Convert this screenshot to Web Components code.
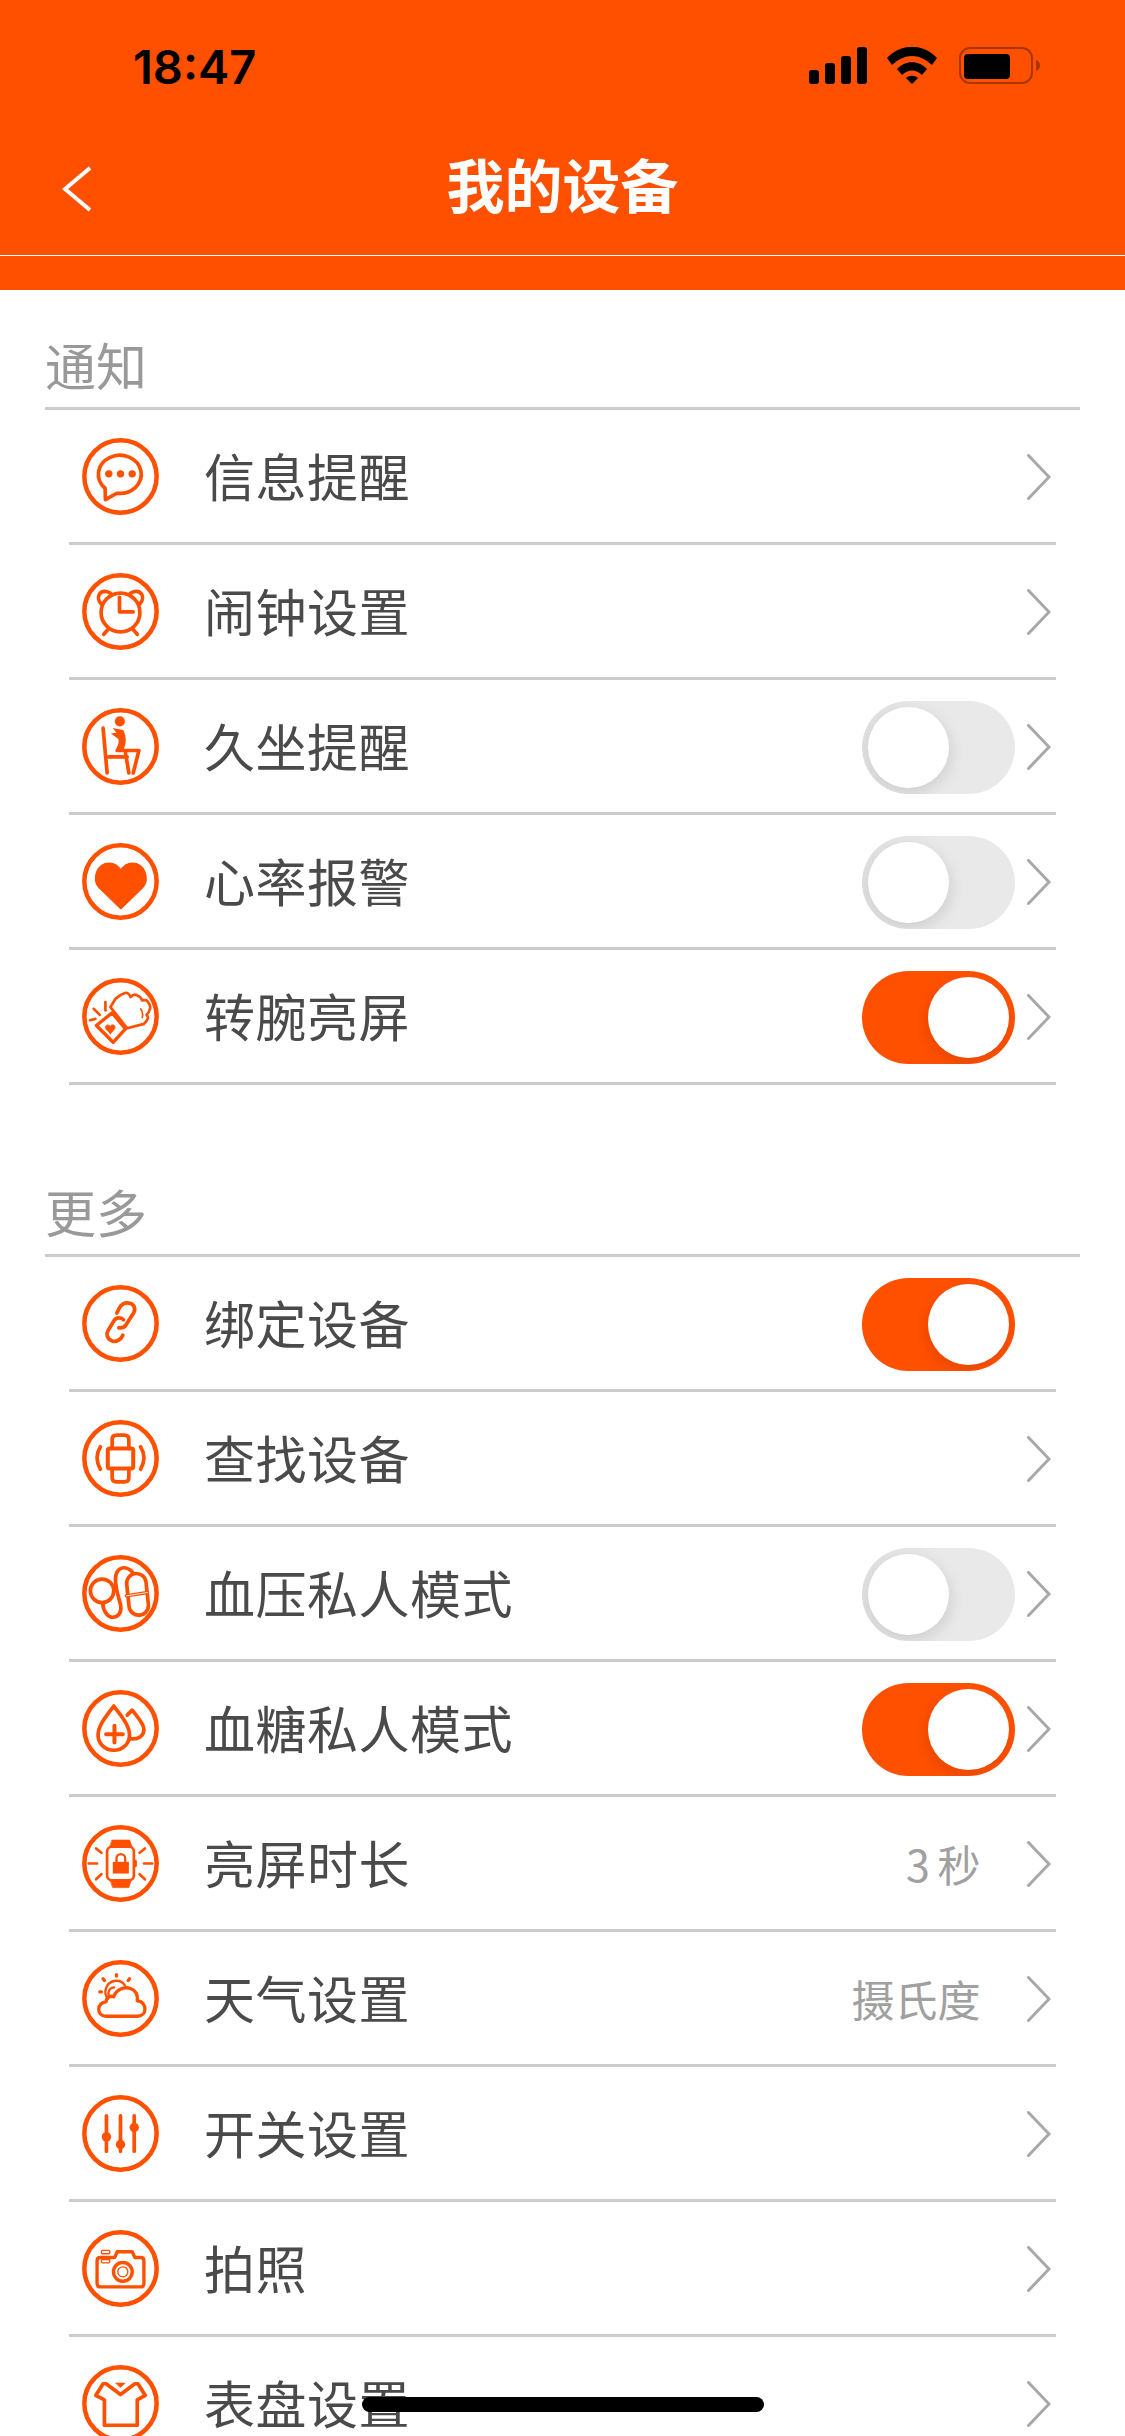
<!DOCTYPE html>
<html lang="zh">
<head>
<meta charset="utf-8">
<title>我的设备</title>
<style>
  html, body { margin: 0; height: 2436px; overflow: hidden; background: #fff; }
  body { font-family: "Noto Sans CJK SC", "Liberation Sans", sans-serif; position: relative; }
</style>
</head>
<body>
<app-header>我的设备</app-header>

<settings-section label="通知">
  <settings-row icon="chat">信息提醒</settings-row>
  <settings-row icon="clock">闹钟设置</settings-row>
  <settings-row icon="sit" toggle="off">久坐提醒</settings-row>
  <settings-row icon="heart" toggle="off">心率报警</settings-row>
  <settings-row icon="wrist" toggle="on">转腕亮屏</settings-row>
</settings-section>

<settings-section label="更多" spaced>
  <settings-row icon="link" toggle="on" no-arrow>绑定设备</settings-row>
  <settings-row icon="watch">查找设备</settings-row>
  <settings-row icon="pressure" toggle="off">血压私人模式</settings-row>
  <settings-row icon="drops" toggle="on">血糖私人模式</settings-row>
  <settings-row icon="bright" value="3 秒">亮屏时长</settings-row>
  <settings-row icon="weather" value="摄氏度">天气设置</settings-row>
  <settings-row icon="sliders">开关设置</settings-row>
  <settings-row icon="camera">拍照</settings-row>
  <settings-row icon="shirt">表盘设置</settings-row>
</settings-section>

<home-indicator></home-indicator>

<script>
// icon bodies, drawn on a 230x230 grid with the ring already in place
const ICONS = {
  chat: `<path d="M69 150L70 184 104 165A64 57 0 1 0 69 150Z"/>
    <g class="f"><circle cx="80" cy="107" r="11"/><circle cx="115" cy="107" r="11"/><circle cx="150" cy="107" r="11"/></g>`,
  clock: `<circle cx="115" cy="118" r="58"/><path d="M112 73V116H153"/>
    <path d="M57 92C38 70 55 45 85 60"/><path d="M173 92C192 70 175 45 145 60"/>
    <path d="M65 183L78 168M165 183L152 168"/>`,
  sit: `<circle class="f" cx="113" cy="40" r="15"/>
    <path d="M63 60L75 194M80 146H135M105 127H170L153 194M130 135L140 194" style="stroke-width:11"/>
    <path class="f" d="M92 60L123 66C132 84 134 105 124 124L100 125C108 113 112 100 108 92L86 76 103 74Z"/>`,
  heart: `<path class="f" style="stroke-width:6" d="M116 195L52 133C30 108 44 61 82 61 96 61 108 70 116 82 124 70 136 61 150 61 188 61 202 108 180 133Z"/>`,
  wrist: `<g style="stroke-width:8">
    <path d="M85 87L100 62Q112 50 130 44Q140 44 145 57Q155 46 165 52Q176 56 180 67Q194 64 197 72Q206 82 203 92Q200 104 193 110Q198 116 197 120Q194 130 185 137L135 150Z"/>
    <path d="M175 92Q184 104 180 118" style="stroke-width:5"/>
    <path d="M43 142L90 104 130 152 93 192Z" style="stroke-width:10"/>
    <path d="M35 92L53 110M70 72V97M24 126L40 122"/></g>
    <path class="f" style="stroke-width:2" d="M85 167L72 153C66 145 74 136 82 142 84 144 85 145 85 145 86 138 98 138 99 147 99 151 96 155 85 167Z"/>`,
  link: `<path d="M110 128Q125 130 132 118L155 82C162 68 152 54 140 54 128 52 118 58 112 68L104 84"/>
    <path d="M122 150C116 165 100 172 88 166 74 160 72 146 78 136L96 106C102 96 116 96 124 104"/>`,
  watch: `<rect x="77" y="85" width="76" height="60" rx="6" style="stroke-width:12"/>
    <path d="M90 85V58Q90 45 103 45H127Q140 45 140 58V85M90 145V172Q90 185 103 185H127Q140 185 140 172V145"/>
    <path d="M55 80Q35 113 55 147M175 80Q195 113 175 147"/>`,
  pressure: `<circle cx="60" cy="107" r="35"/>
    <path d="M62 145C64 170 78 186 92 186 108 186 118 172 116 155 114 135 100 110 100 72 100 50 112 38 125 38 136 38 144 44 150 50"/>
    <rect x="137" y="55" width="58" height="125" rx="29" transform="rotate(-6 166 118)"/>
    <path d="M132 122L196 112" style="stroke-width:10"/><path d="M132 122L196 112" style="stroke:#fff;stroke-width:2.5"/>`,
  drops: `<path d="M95 48C75 75 48 105 48 135A47 45 0 0 0 142 135C142 105 115 75 95 48Z"/>
    <path d="M97 107V157M72 132H122" style="stroke-width:12"/>
    <path d="M135 75L150 60C165 80 185 100 185 118 185 136 170 148 146 146"/>`,
  bright: `<rect x="75" y="65" width="80" height="100" rx="14" style="stroke-width:8"/>
    <path class="f" style="stroke-width:2" d="M90 45H142L150 65H83ZM85 165H147L140 187H92Z"/>
    <path class="f" style="stroke-width:0" d="M92 110H140V145H92Z"/>
    <path d="M103 110V100A13 13 0 0 1 129 100V110" style="stroke-width:7"/>
    <path d="M20 115H45M42 70L58 83M42 162L58 147M185 115H210M188 70L172 83M188 162L172 147M160 108V122" style="stroke-width:8"/>`,
  weather: `<path d="M72 168C58 168 50 158 50 147 50 135 60 125 72 125 72 112 85 105 95 110 100 90 125 78 145 85 160 90 168 105 165 122 180 122 188 135 188 147 188 160 178 168 165 168Z" style="stroke-width:10"/>
    <path d="M78 115C62 100 70 65 100 62 112 61 122 66 128 76M80 108C76 98 80 84 96 82" style="stroke-width:7"/>
    <path d="M63 56L67 61M103 44V48M142 56L138 61M53 95H58" style="stroke-width:10"/>`,
  sliders: `<path d="M73 62V168M115 62V168M156 62V168" style="stroke-width:11"/>
    <g class="f" style="stroke-width:0"><circle cx="73" cy="125" r="14"/><circle cx="115" cy="148" r="14"/><circle cx="156" cy="97" r="14"/></g>`,
  camera: `<path d="M55 82H98L105 65H150L158 82H175Q185 82 185 92V160Q185 170 175 170H55Q45 170 45 160V92Q45 82 55 82Z" style="stroke-width:10"/>
    <circle cx="122" cy="125" r="28" style="stroke-width:10"/><circle cx="122" cy="125" r="15" style="stroke-width:4"/>
    <rect x="58" y="61" width="25" height="10" rx="3" style="stroke-width:4"/><rect x="58" y="88" width="25" height="10" rx="3" style="stroke-width:4"/>`,
  shirt: `<path d="M72 56L115 88 158 56H167L189 91 165 104V180H67V104L41 91 63 56Z"/>
    <path class="f" style="stroke-width:2" d="M101 54H129L115 67Z"/>`,
};

const headerTemplate = document.createElement('template');
headerTemplate.innerHTML = `
  <style>
    :host { display: block; height: 290px; background: #ff5000; }
    .status { height: 132px; display: flex; align-items: flex-start; box-sizing: border-box; padding: 47px 85px 0 133px; }
    .time { font: 600 47px/40px Inter, "Liberation Sans", sans-serif; color: #000; }
    .tray { margin-left: auto; display: flex; align-items: flex-start; }
    .signal { display: block; margin-right: 20px; }
    .wifi { display: block; margin-right: 22px; }
    .nav { height: 123px; border-bottom: 1px solid #fff; display: flex; align-items: center; justify-content: center; position: relative; }
    .title { font-size: 58px; line-height: 70px; font-weight: 700; color: #fff; margin-bottom: 22px; }
    .back { position: absolute; left: 62px; top: 34px; }
  </style>
  <div class="status">
    <span class="time">18:47</span>
    <div class="tray">
      <svg class="signal" width="58" height="37" viewBox="0 0 58 37"><g fill="#000">
        <rect x="0" y="23" width="10" height="14" rx="3"/><rect x="16" y="16" width="10" height="21" rx="3"/>
        <rect x="32" y="9" width="10" height="28" rx="3"/><rect x="48" y="0" width="10" height="37" rx="3"/></g></svg>
      <svg class="wifi" width="50" height="37" viewBox="0 0 50 37"><g fill="#000">
        <path d="M0 11C14-4 36-4 50 11L45 18C32 6 18 6 5 18Z"/>
        <path d="M10 22C18 13 32 13 40 22L35 28C29 22 21 22 15 28Z"/>
        <path d="M19 31C22 28 28 28 31 31L25 37Z"/></g></svg>
      <svg width="81" height="37" viewBox="0 0 81 37">
        <rect x="1" y="1" width="72" height="35" rx="10" fill="none" stroke="#a83600" stroke-width="2"/>
        <rect x="5" y="7" width="46" height="25" rx="4" fill="#000"/>
        <path d="M77 13C80 14 81 16 81 18.500 81 21 80 23 77 24Z" fill="#a83600"/>
      </svg>
    </div>
  </div>
  <div class="nav">
    <svg class="back" width="30" height="46" viewBox="0 0 30 46"><path d="M28 2L3 23 28 44" fill="none" stroke="#fff" stroke-width="4"/></svg>
    <span class="title"><slot></slot></span>
  </div>`;

class AppHeader extends HTMLElement {
  constructor() {
    super();
    this.attachShadow({ mode: 'open' });
    this.shadowRoot.appendChild(headerTemplate.content.cloneNode(true));
  }
}

const sectionTemplate = document.createElement('template');
sectionTemplate.innerHTML = `
  <style>
    :host { display: block; margin: 0 45px; padding-top: 44px; }
    :host([spaced]) { padding-top: 96px; }
    .label { font-size: 51px; line-height: 60px; font-weight: 400; color: #999; height: 73px; }
    .rule { height: 3px; background: #ccc; }
    .rows { display: block; margin: 0 24px; }
  </style>
  <div class="label"></div>
  <div class="rule"></div>
  <div class="rows"><slot></slot></div>`;

class SettingsSection extends HTMLElement {
  constructor() {
    super();
    this.attachShadow({ mode: 'open' });
    this.shadowRoot.appendChild(sectionTemplate.content.cloneNode(true));
  }
  connectedCallback() {
    this.shadowRoot.querySelector('.label').textContent = this.getAttribute('label');
  }
}

class RowIcon extends HTMLElement {
  static get observedAttributes() { return ['name']; }
  constructor() {
    super();
    this.attachShadow({ mode: 'open' });
  }
  attributeChangedCallback() {
    this.shadowRoot.innerHTML = `
      <style>
        :host { display: block; width: 77px; height: 77px; flex: none; }
        svg { display: block; fill: none; stroke: #ff5000; stroke-width: 11; stroke-linecap: round; stroke-linejoin: round; }
        .f { fill: #ff5000; stroke: #ff5000; stroke-width: 0; }
      </style>
      <svg width="77" height="77" viewBox="0 0 230 230">
        <circle cx="115" cy="115" r="108" style="stroke-width:13.500"/>
        ${ICONS[this.getAttribute('name')] || ''}
      </svg>`;
  }
}

const toggleTemplate = document.createElement('template');
toggleTemplate.innerHTML = `
  <style>
    :host { display: block; width: 153px; height: 93px; margin-top: 3px; border-radius: 47px; background: linear-gradient(90deg, #dedede, #e9e9e9 45%); position: relative; overflow: hidden; flex: none; }
    :host([on]) { background: #ff5000; }
    .knob { position: absolute; left: 6px; top: 6px; width: 81px; height: 81px; border-radius: 50%; background: #fff; box-shadow: 3px 5px 14px rgba(0,0,0,.1); }
    :host([on]) .knob { left: 66px; box-shadow: -2px 5px 14px rgba(0,0,0,.1); }
  </style>
  <div class="knob"></div>`;

class ToggleSwitch extends HTMLElement {
  constructor() {
    super();
    this.attachShadow({ mode: 'open' });
    this.shadowRoot.appendChild(toggleTemplate.content.cloneNode(true));
  }
}

const rowTemplate = document.createElement('template');
rowTemplate.innerHTML = `
  <style>
    :host { display: flex; align-items: center; height: 132px; border-bottom: 3px solid #ccc; padding: 0 5px 0 12.500px; }
    .label { margin: -2px 0 0 45.500px; font-size: 51px; line-height: 70px; letter-spacing: 0.5px; color: #4a4a4a; font-weight: 400; }
    .end { margin-left: auto; display: flex; align-items: center; }
    .value { font-size: 43px; line-height: 60px; color: #a0a0a0; margin-right: 34px; word-spacing: -2px; }
    .arrow { display: block; margin: 2px 0 0 12.500px; }
  </style>
  <row-icon></row-icon>
  <span class="label"><slot></slot></span>
  <div class="end">
    <span class="value"></span>
    <svg class="arrow" width="24" height="46" viewBox="0 0 24 46"><path d="M1.500 1.500L22 23 1.500 44.500" fill="none" stroke="#a8a8a8" stroke-width="3" stroke-linecap="round"/></svg>
  </div>`;

class SettingsRow extends HTMLElement {
  constructor() {
    super();
    this.attachShadow({ mode: 'open' });
    this.shadowRoot.appendChild(rowTemplate.content.cloneNode(true));
  }
  connectedCallback() {
    const root = this.shadowRoot;
    root.querySelector('row-icon').setAttribute('name', this.getAttribute('icon'));

    const value = root.querySelector('.value');
    if (this.hasAttribute('value')) value.textContent = this.getAttribute('value');
    else value.remove();

    if (this.hasAttribute('toggle')) {
      const sw = document.createElement('toggle-switch');
      if (this.getAttribute('toggle') === 'on') sw.setAttribute('on', '');
      root.querySelector('.end').prepend(sw);
    }
    if (this.hasAttribute('no-arrow')) root.querySelector('.arrow').style.visibility = 'hidden';
  }
}

const homeTemplate = document.createElement('template');
homeTemplate.innerHTML = `
  <style>
    :host { display: block; position: absolute; left: 362px; top: 2397px; width: 402px; height: 15px; border-radius: 8px; background: #000; }
  </style>`;

class HomeIndicator extends HTMLElement {
  constructor() {
    super();
    this.attachShadow({ mode: 'open' });
    this.shadowRoot.appendChild(homeTemplate.content.cloneNode(true));
  }
}

customElements.define('row-icon', RowIcon);
customElements.define('toggle-switch', ToggleSwitch);
customElements.define('app-header', AppHeader);
customElements.define('settings-section', SettingsSection);
customElements.define('settings-row', SettingsRow);
customElements.define('home-indicator', HomeIndicator);
</script>
</body>
</html>
